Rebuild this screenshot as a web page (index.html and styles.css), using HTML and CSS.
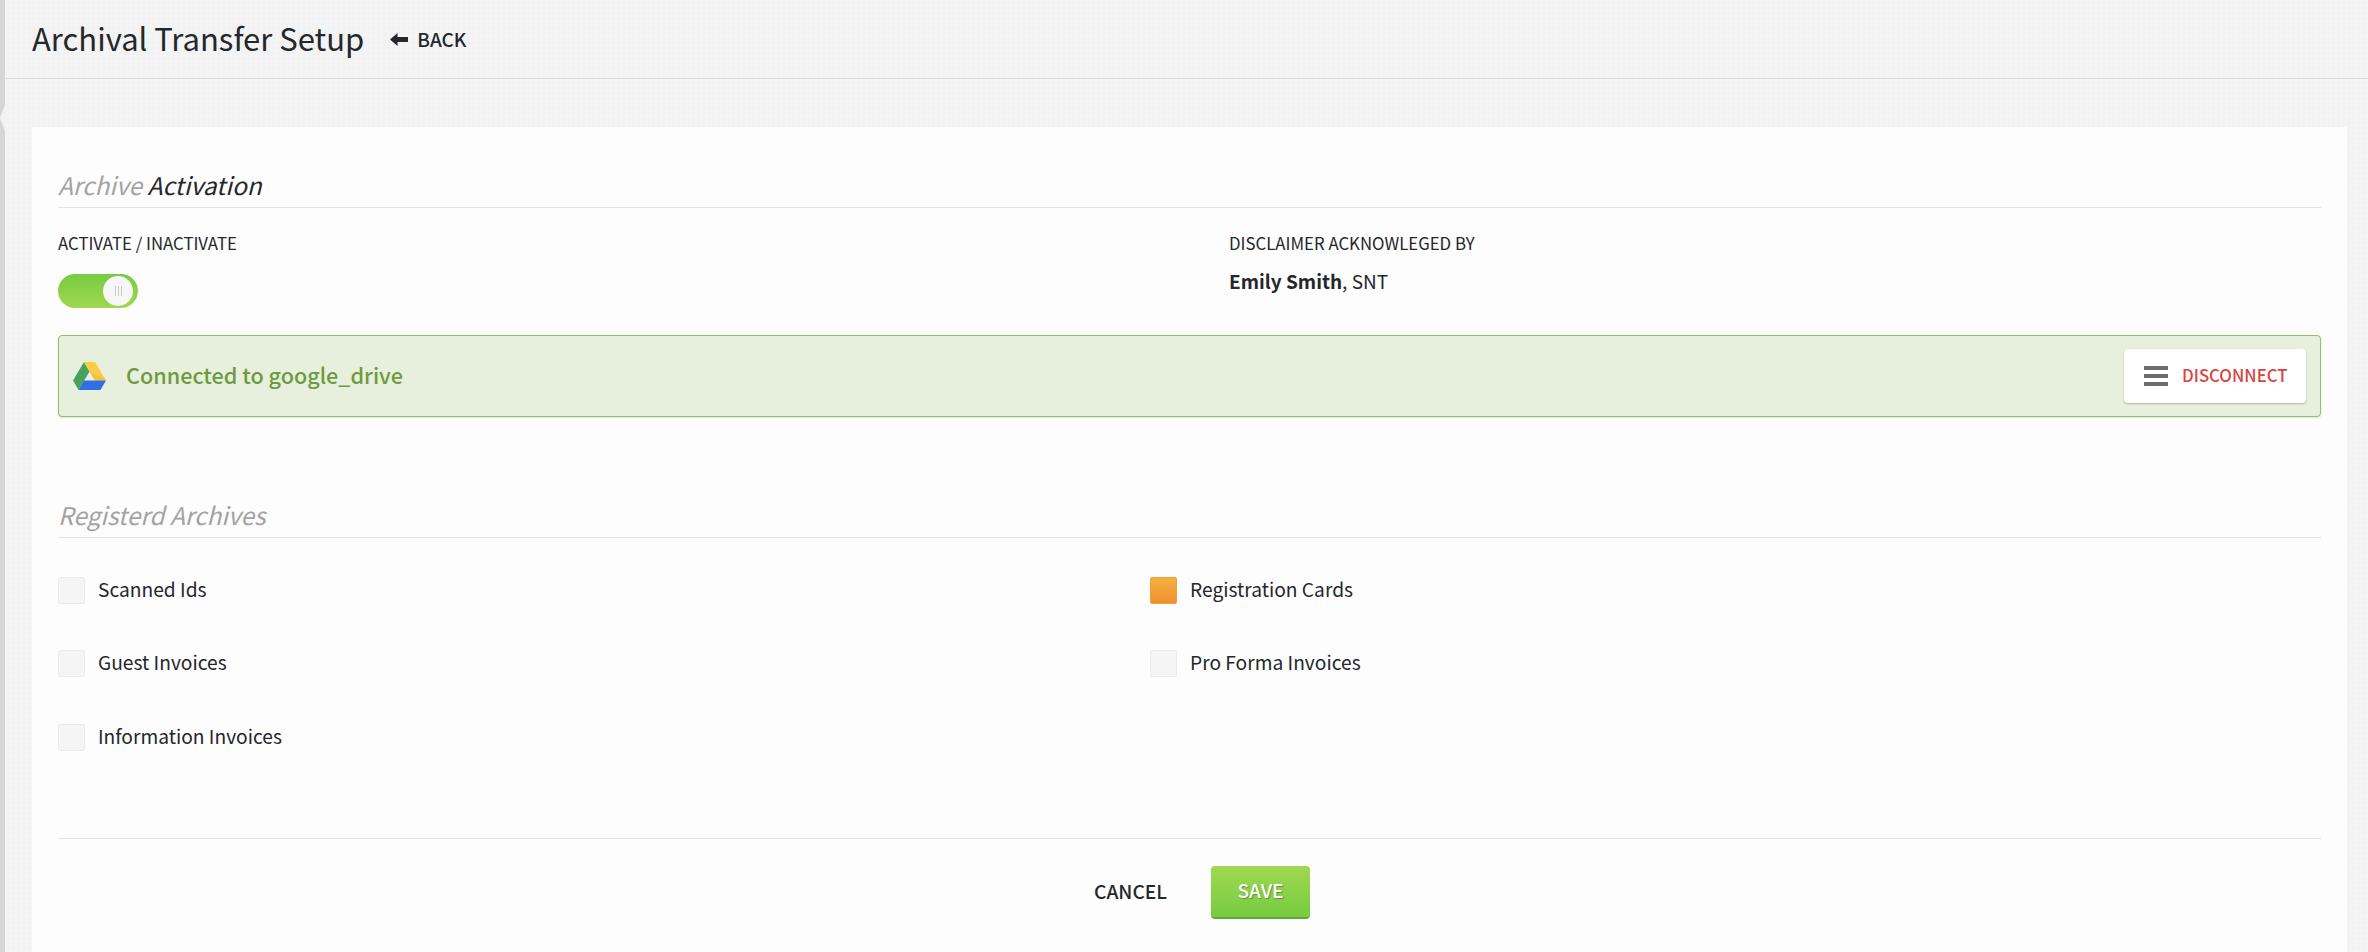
FILE: index.html
```html
<!DOCTYPE html>
<html lang="en">
<head>
<meta charset="utf-8">
<title>Archival Transfer Setup</title>
<link rel="stylesheet" href="styles.css">
</head>
<body>
<div class="edge"></div>
<header class="page-header">
  <h1 class="page-title">Archival Transfer Setup</h1>
  <a class="back-link">
    <svg class="back-icon" viewBox="0 0 18 13" aria-hidden="true"><path d="M0 6.5 L7.5 0 V4 H18 V9 H7.5 V13 Z"/></svg>
    BACK
  </a>
</header>
<main class="content">
  <section class="card">
    <h2 class="section-title"><span class="muted">Archive</span> Activation</h2>
    <div class="activation-row">
      <div>
        <div class="field-label">ACTIVATE / INACTIVATE</div>
        <div class="toggle"><span class="knob"><i></i><i></i><i></i></span></div>
      </div>
      <div>
        <div class="field-label">DISCLAIMER ACKNOWLEGED BY</div>
        <div class="acknowledged"><strong>Emily Smith</strong>, SNT</div>
      </div>
    </div>
    <div class="alert">
      <svg class="drive-icon" viewBox="0 0 33 28" aria-hidden="true">
        <path fill="#4aa05e" d="M11 0 L16.5 9.5 L5.6 28 L0 18.6 Z"/>
        <path fill="#fbcd45" d="M11 0 H22 L33 18.6 H22 Z"/>
        <path fill="#e8b63c" d="M16.5 9.5 L22 18.6 H33 L31.4 16 L20 12 Z" opacity=".55"/>
        <path fill="#2f6fe0" d="M11 18.6 H33 L27.5 28 H5.6 Z"/>
      </svg>
      <span class="alert-text">Connected to google_drive</span>
      <button class="disconnect">
        <span class="burger"><i></i><i></i><i></i></span>
        <span class="disconnect-text">DISCONNECT</span>
      </button>
    </div>
    <h2 class="section-title section-gap"><span class="muted">Registerd Archives</span></h2>
    <div class="archives">
      <div class="check-item"><span class="box"></span><span class="check-text">Scanned Ids</span></div>
      <div class="check-item"><span class="box on"></span><span class="check-text">Registration Cards</span></div>
      <div class="check-item"><span class="box"></span><span class="check-text">Guest Invoices</span></div>
      <div class="check-item"><span class="box"></span><span class="check-text">Pro Forma Invoices</span></div>
      <div class="check-item"><span class="box"></span><span class="check-text">Information Invoices</span></div>
    </div>
    <footer class="actions">
      <button class="cancel">CANCEL</button>
      <button class="save">SAVE</button>
    </footer>
  </section>
</main>
</body>
</html>
```
FILE: styles.css
```css
* { box-sizing: border-box; }
html, body { height: 100%; }
body {
  margin: 0;
  height: 952px;
  overflow: hidden;
  display: flex;
  flex-direction: column;
  font-family: "Noto Sans CJK SC", "Lato", "Liberation Sans", sans-serif;
  color: #24272b;
  background-color: #f3f3f3;
  background-image:
    radial-gradient(circle at 1px 1px, #f5f5f5 1px, transparent 1.5px),
    radial-gradient(circle at 4px 3px, #f1f1f1 1px, transparent 1.5px);
  background-size: 5px 5px;
}
.edge {
  position: absolute;
  left: 0;
  top: 0;
  width: 5px;
  height: 952px;
  background: #d6d6d6;
  clip-path: polygon(0 0, 100% 0, 100% 105px, 0 118px, 100% 131px, 100% 100%, 0 100%, 0 118px, 0 0);
}
.page-header {
  height: 79px;
  flex: none;
  padding: 0 0 0 32px;
  display: flex;
  align-items: center;
  border-bottom: 1px solid #dadada;
}
.page-title {
  margin: 0;
  padding-bottom: 2px;
  font-size: 31px;
  line-height: 76px;
  font-weight: 400;
  color: #24272b;
}
.back-link {
  margin-left: 26px;
  display: flex;
  align-items: center;
  font-size: 19px;
  line-height: 24px;
  font-weight: 500;
}
.back-icon { width: 18px; height: 13px; margin-right: 9px; fill: #24272b; }
.content { flex: 1; padding: 48px 21px 0 32px; min-height: 0; }
.card {
  height: 100%;
  background: #fdfdfd;
  padding: 40px 26px 0;
}
.section-title {
  margin: 0;
  height: 41px;
  line-height: 36px;
  font-size: 24.4px;
  font-weight: 400;
  font-style: italic;
  color: #24272b;
  border-bottom: 1px solid #e3e3e3;
}
.muted { color: #a3a3a3; }
.section-gap { margin-top: 80px; }
.activation-row {
  display: grid;
  grid-template-columns: 1171px 1fr;
  margin-top: 25px;
}
.field-label {
  font-size: 16.8px;
  line-height: 20px;
  height: 22px;
  color: #24272b;
}
.toggle {
  margin-top: 19px;
  width: 80px;
  height: 34px;
  border-radius: 17px;
  background: linear-gradient(#76cc42, #a0d850);
  position: relative;
}
.knob {
  position: absolute;
  right: 5px;
  top: 2px;
  width: 30px;
  height: 30px;
  border-radius: 50%;
  background: #f7f7f7;
  display: flex;
  align-items: center;
  justify-content: center;
  gap: 2px;
}
.knob i { width: 1px; height: 10px; background: #c9c9c9; }
.acknowledged {
  margin-top: 14px;
  font-size: 19px;
  line-height: 24px;
}
.alert {
  margin-top: 27px;
  height: 82px;
  display: flex;
  align-items: center;
  padding: 0 14px;
  background: #e7efdd;
  border: 1px solid #95bf68;
  border-radius: 4px;
  box-shadow: 0 1px 2px rgba(0, 0, 0, .12);
}
.drive-icon { width: 33px; height: 28px; flex: none; }
.alert-text {
  margin-left: 20px;
  padding-bottom: 3px;
  font-size: 21.6px;
  font-weight: 500;
  color: #6f9a3e;
}
.disconnect {
  margin-left: auto;
  width: 182px;
  height: 54px;
  display: flex;
  align-items: center;
  padding: 0 0 0 20px;
  font: inherit;
  font-size: 16.8px;
  font-weight: 500;
  color: #d9443f;
  background: #fff;
  border: 0;
  border-radius: 4px;
  box-shadow: 0 1px 2px rgba(0, 0, 0, .25);
}
.disconnect-text { padding-bottom: 3px; }
.burger {
  width: 24px;
  margin-right: 14px;
  display: flex;
  flex-direction: column;
  gap: 4px;
}
.burger i { height: 4px; background: #6e6e6e; }
.archives {
  margin-top: 39px;
  display: grid;
  grid-template-columns: 1092px 1fr;
  grid-auto-rows: 27px;
  row-gap: 46.4px;
}
.check-item {
  display: flex;
  align-items: center;
  font-size: 19.2px;
  line-height: 27px;
}
.check-text { padding-bottom: 2px; }
.box {
  width: 27px;
  height: 27px;
  margin-right: 13px;
  flex: none;
  background: #f5f5f5;
  border-radius: 2px;
  border: 1px solid #ebebeb;
}
.box.on {
  background: linear-gradient(#f3b23f, #f08f2f);
  border-color: #eda13a;
}
.actions {
  margin-top: 87px;
  padding: 27px 3px 0 0;
  border-top: 1px solid #e3e3e3;
  display: flex;
  justify-content: center;
  align-items: flex-start;
}
.cancel, .save {
  font: inherit;
  font-size: 19.2px;
  font-weight: 500;
  border: 0;
  height: 53px;
  padding-bottom: 4px;
}
.cancel {
  padding-left: 28px;
  padding-right: 28px;
  margin-right: 16px;
  background: none;
  color: #24272b;
}
.save {
  width: 99px;
  color: #fff;
  text-shadow: 1px 1px 1px rgba(60, 110, 30, .6);
  background: linear-gradient(#a0d850, #76cc42);
  border-bottom: 2px solid #64a832;
  border-radius: 4px;
}
```
